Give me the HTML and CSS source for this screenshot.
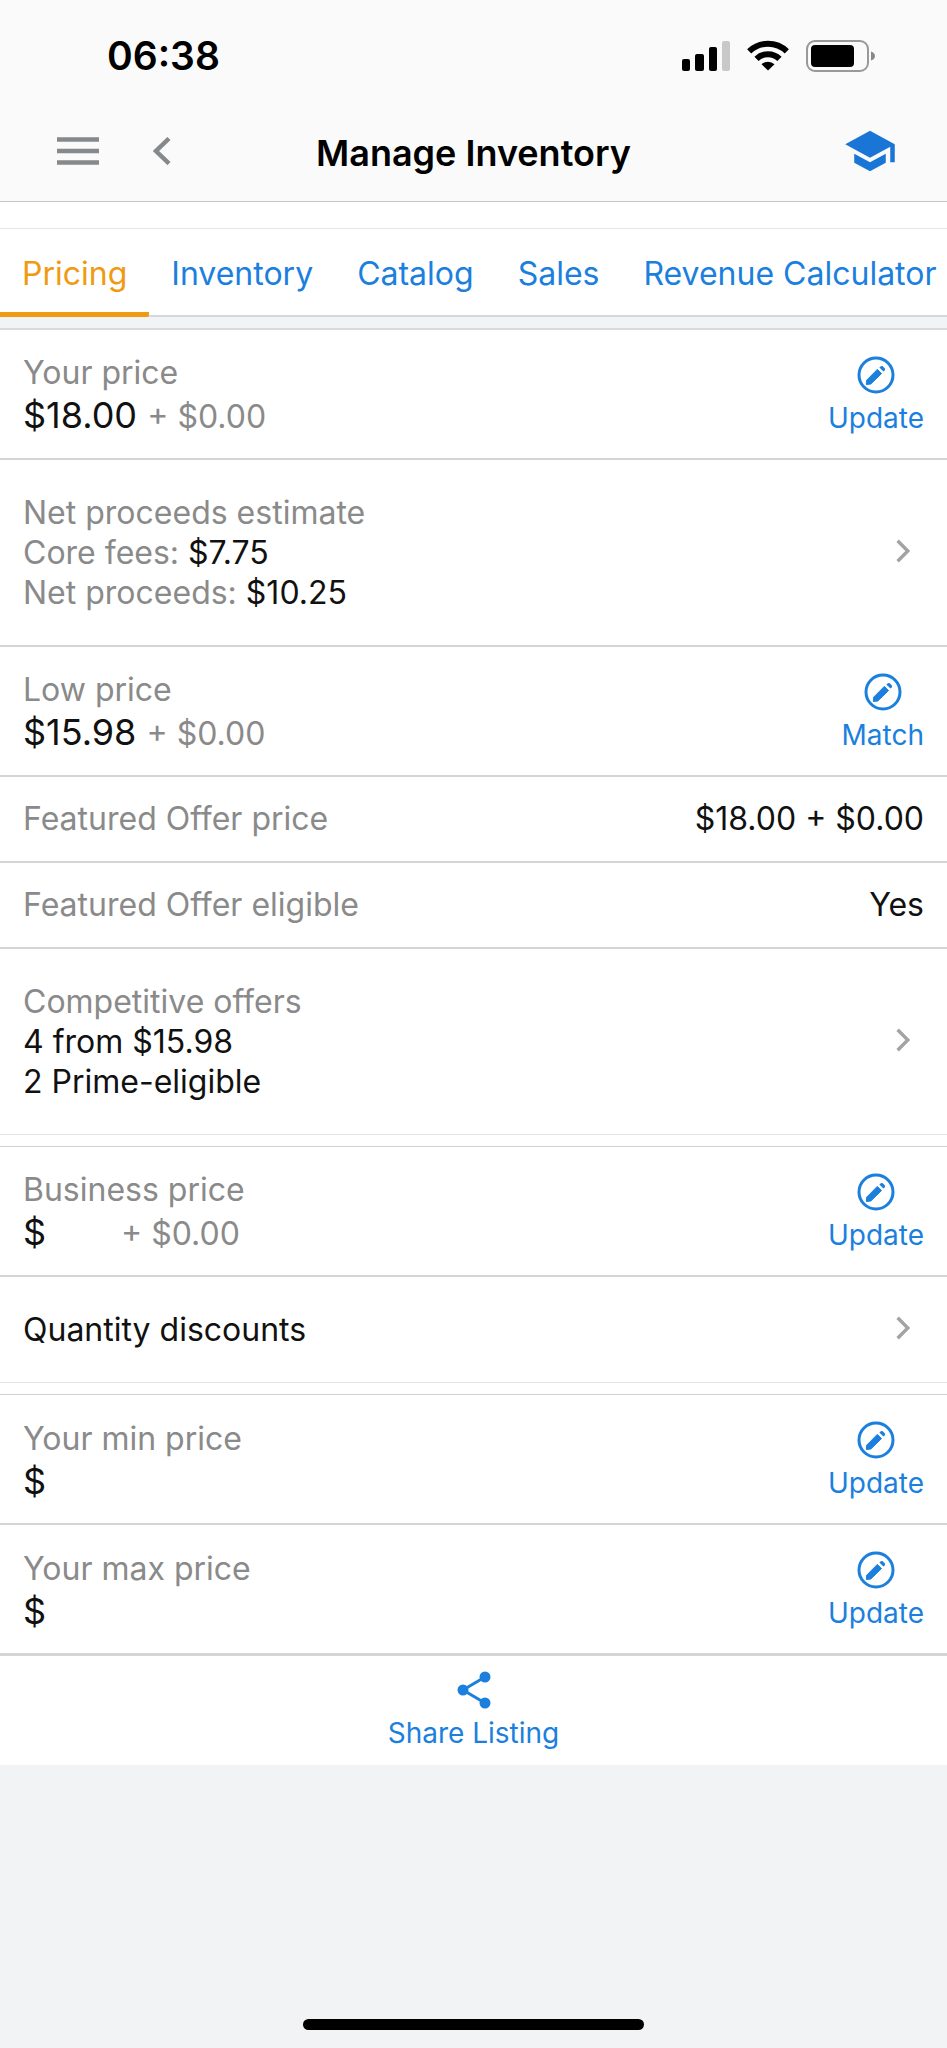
FILE: index.html
```html
<!DOCTYPE html>
<html lang="en">
<head>
    <meta charset="UTF-8">
    <meta name="viewport" content="width=device-width, initial-scale=1">
    <title>Manage Inventory</title>
    <link rel="stylesheet" href="styles.css">
</head>
<body>
    <!-- shared icons -->
    <svg class="sprite" aria-hidden="true">
        <symbol id="edit" viewBox="0 0 38 38">
            <circle cx="19" cy="19" r="17" fill="none" stroke="currentColor" stroke-width="3"/>
            <path d="M9.300 28.500l.4-4.300L20.300 13.400l4.200 4.200L13.800 28z" fill="currentColor" stroke="currentColor" stroke-width="1" stroke-linejoin="round"/>
            <path d="M22.400 11.600l1.400-1.300q1-.8 2 0l1.900 1.900q.9 1 0 2L26.400 15.600z" fill="currentColor"/>
        </symbol>
        <symbol id="next" viewBox="0 0 14 22">
            <path d="M1.500 1.500l9.500 9.500-9.500 9.500" fill="none" stroke="currentColor" stroke-width="3.200"/>
        </symbol>
    </svg>

    <header class="header">
        <div class="status">
            <span class="time">06:38</span>
            <svg class="status-icons" viewBox="0 0 194 32" aria-hidden="true">
                <rect x="0" y="19" width="8" height="12" rx="2"/>
                <rect x="13" y="14" width="9" height="17" rx="2"/>
                <rect x="27" y="7" width="8" height="24" rx="2"/>
                <rect x="40" y="1" width="8" height="30" rx="2" fill="#c8c8c8"/>
                <g fill="none" stroke="#000" stroke-width="6">
                    <path d="M67.200 11.300a27 27 0 0 1 37.600 0"/>
                    <path d="M74.500 18.800a16.500 16.500 0 0 1 23 0"/>
                </g>
                <path d="M79.500 24.200a9.500 9.500 0 0 1 13 0L86 30.500z"/>
                <rect x="125" y="1" width="61" height="30" rx="8" fill="none" stroke="#999" stroke-width="2"/>
                <rect x="129" y="5" width="43" height="22" rx="4"/>
                <path d="M189 11.500q4 1.500 4 4.500t-4 4.500z" fill="#888"/>
            </svg>
        </div>
        <div class="bar">
            <div class="bar-left">
                <button class="icon-btn" aria-label="Menu">
                    <svg width="42" height="28" viewBox="0 0 42 28"><path d="M0 2.500h42M0 14h42M0 25.500h42" stroke="currentColor" stroke-width="4.500"/></svg>
                </button>
                <button class="icon-btn" aria-label="Back">
                    <svg width="18" height="28" viewBox="0 0 18 28"><path d="M16 1.500L3 14l13 12.500" fill="none" stroke="currentColor" stroke-width="4.500"/></svg>
                </button>
            </div>
            <h1>Manage Inventory</h1>
            <button class="icon-btn learn" aria-label="Learn">
                <svg width="54" height="54" viewBox="0 0 24 24"><path d="M5 13.180v4L12 21l7-3.820v-4L12 17l-7-3.820zM12 3L1 9l11 6 9-4.910V17h2V9L12 3z" fill="currentColor"/></svg>
            </button>
        </div>
    </header>

    <nav class="tabs">
        <a href="#" class="active">Pricing</a>
        <a href="#">Inventory</a>
        <a href="#">Catalog</a>
        <a href="#">Sales</a>
        <a href="#">Revenue Calculator</a>
    </nav>

    <main>
        <section class="group">
            <div class="row price-row">
                <div>
                    <div class="label">Your price</div>
                    <div class="price">$18.00 <span class="ship">+ $0.00</span></div>
                </div>
                <button class="action"><svg><use href="#edit"/></svg>Update</button>
            </div>
            <a href="#" class="row link-row">
                <div>
                    <div class="label">Net proceeds estimate</div>
                    <div><span class="label">Core fees:</span> $7.75</div>
                    <div><span class="label">Net proceeds:</span> $10.25</div>
                </div>
                <svg class="next"><use href="#next"/></svg>
            </a>
            <div class="row price-row">
                <div>
                    <div class="label">Low price</div>
                    <div class="price">$15.98 <span class="ship">+ $0.00</span></div>
                </div>
                <button class="action"><svg><use href="#edit"/></svg>Match</button>
            </div>
            <div class="row">
                <span class="label">Featured Offer price</span>
                <span>$18.00 + $0.00</span>
            </div>
            <div class="row">
                <span class="label">Featured Offer eligible</span>
                <span>Yes</span>
            </div>
            <a href="#" class="row link-row">
                <div>
                    <div class="label">Competitive offers</div>
                    <div>4 from $15.98</div>
                    <div>2 Prime-eligible</div>
                </div>
                <svg class="next"><use href="#next"/></svg>
            </a>
        </section>

        <section class="group">
            <div class="row price-row">
                <div>
                    <div class="label">Business price</div>
                    <div class="price"><span class="empty">$</span><span class="ship">+ $0.00</span></div>
                </div>
                <button class="action"><svg><use href="#edit"/></svg>Update</button>
            </div>
            <a href="#" class="row link-row">
                <span>Quantity discounts</span>
                <svg class="next"><use href="#next"/></svg>
            </a>
        </section>

        <section class="group last">
            <div class="row price-row">
                <div>
                    <div class="label">Your min price</div>
                    <div class="price">$</div>
                </div>
                <button class="action"><svg><use href="#edit"/></svg>Update</button>
            </div>
            <div class="row price-row">
                <div>
                    <div class="label">Your max price</div>
                    <div class="price">$</div>
                </div>
                <button class="action"><svg><use href="#edit"/></svg>Update</button>
            </div>
        </section>

        <button class="share">
            <svg width="34" height="38" viewBox="0 0 34 38"><path d="M28 6L6 19l22 13" fill="none" stroke="currentColor" stroke-width="3"/><g fill="currentColor"><circle cx="28" cy="6" r="5.500"/><circle cx="6" cy="19" r="5.500"/><circle cx="28" cy="32" r="5.500"/></g></svg>
            Share Listing
        </button>
    </main>

    <footer class="home"><div class="home-bar"></div></footer>
</body>
</html>
```

FILE: styles.css
```css
* { box-sizing: border-box; }
body {
    margin: 0;
    min-height: 100vh;
    display: flex;
    flex-direction: column;
    background: #f2f3f5;
    color: #111;
    font-family: Inter, "Liberation Sans", sans-serif;
    font-size: 32px;
    line-height: 40px;
}
a { color: inherit; text-decoration: none; }
button {
    padding: 0;
    border: 0;
    background: none;
    color: #1b80dd;
    font: inherit;
    cursor: pointer;
}
svg { display: block; }
.sprite { position: absolute; width: 0; height: 0; }

/* header */
.header { background: #fafafa; border-bottom: 1px solid #c6c6c8; }
.status {
    display: flex;
    justify-content: space-between;
    align-items: center;
    padding: 32px 71px 0 107px;
}
.time { font-size: 39px; line-height: 48px; font-weight: 600; color: #000; }
.status-icons { width: 194px; height: 32px; }
.bar {
    display: grid;
    grid-template-columns: 1fr auto 1fr;
    align-items: center;
    padding: 44px 50px 23px;
}
.bar-left { display: flex; gap: 54px; padding-left: 7px; }
.bar-left .icon-btn { color: #85898c; }
.learn { justify-self: end; color: #1976d6; }
h1 { margin: 0; padding-top: 4px; font-size: 36px; line-height: 48px; font-weight: 600; color: #000; }

/* tabs */
.tabs {
    display: flex;
    border-top: 26px solid #fff;
    border-bottom: 2px solid #d5d8db;
    background: #fff;
    color: #1b80dd;
    box-shadow: inset 0 1px #e6e6e6;
}
.tabs a { flex: none; padding: 26px 22px 21px; white-space: nowrap; }
.tabs .active {
    color: #f09a12;
    border-bottom: 5px solid #f09a12;
    border-radius: 0 0 2px 0;
    padding-bottom: 18px;
    margin-bottom: -2px;
}

/* rows */
main { background: #fff; }
main::before {
    content: "";
    display: block;
    height: 11px;
    background: #f2f3f5;
    border-bottom: 2px solid #d8dadc;
}
.group { border-top: 1px solid #d0d0d2; border-bottom: 1px solid #e3e3e3; }
.group:first-child { border-top: 0; }
.group + .group { margin-top: 11px; }
.group.last { border-bottom: 3px solid #d5d5d7; }
.row {
    display: flex;
    justify-content: space-between;
    align-items: center;
    min-height: 86px;
    padding: 22px 23px;
    border-bottom: 2px solid #d5d5d7;
}
.row:last-child { border-bottom: 0; }
.label, .ship { color: #8a8a8a; }
.price-row { min-height: 130px; padding: 4px 23px 0; }
.price-row:last-child { min-height: 128px; }
.price { font-size: 36px; line-height: 44px; }
.ship { font-size: 32px; }
.empty { display: inline-block; width: 98px; }
.link-row { padding: 33px 36px 32px 23px; }
.next { width: 15px; height: 24px; margin-bottom: 4px; color: #a3a3a3; }
.action, .share {
    display: flex;
    flex-direction: column;
    align-items: center;
    font-size: 28px;
    line-height: 36px;
}
.action { gap: 6px; }
.action svg { width: 38px; height: 38px; }
.share { width: 100%; gap: 6px; padding: 15px 0 14px; }

/* home indicator */
.home { margin-top: auto; padding-bottom: 18px; }
.home-bar { width: 36%; height: 11px; margin: 0 auto; border-radius: 6px; background: #000; }
```
